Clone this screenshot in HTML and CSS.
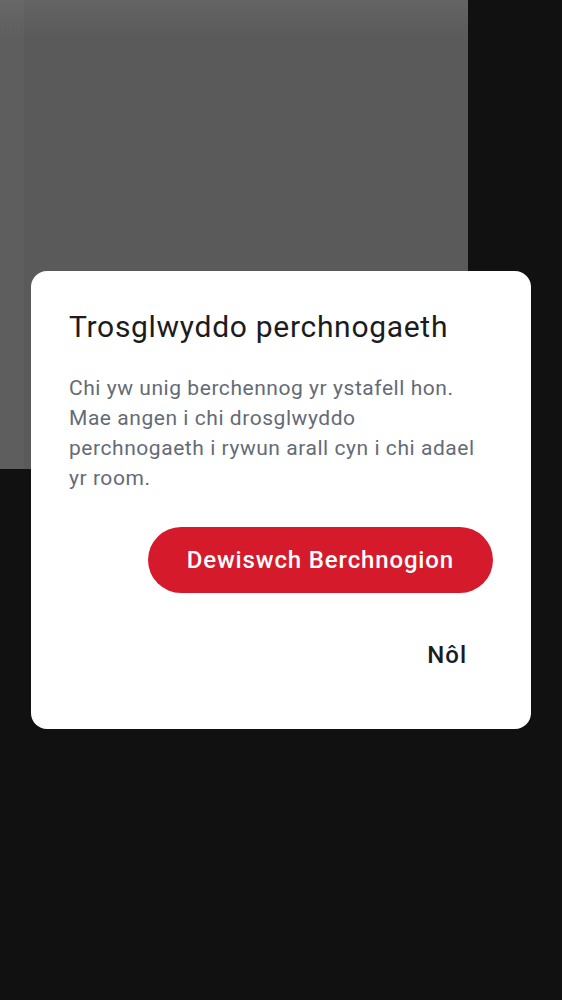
FILE: index.html
```html
<!DOCTYPE html>
<html lang="cy">
<head>
<meta charset="utf-8">
<title>Trosglwyddo perchnogaeth</title>
<link rel="stylesheet" href="styles.css">
</head>
<body>
<div class="screen">
  <div class="video"></div>
</div>
<div class="overlay">
  <div class="dialog" role="dialog">
    <h1 class="title">Trosglwyddo perchnogaeth</h1>
    <p class="message">Chi yw unig berchennog yr ystafell hon. Mae angen i chi drosglwyddo perchnogaeth i rywun arall cyn i chi adael yr room.</p>
    <div class="actions">
      <button class="btn-primary">Dewiswch Berchnogion</button>
      <button class="btn-text">Nôl</button>
    </div>
  </div>
</div>
</body>
</html>
```
FILE: styles.css
```css
html, body {
  margin: 0;
  padding: 0;
}
body {
  background: #111111;
  width: 562px;
  height: 1000px;
  overflow: hidden;
  font-family: Roboto, "Noto Sans", sans-serif;
}
.screen {
  display: flex;
}
.video {
  width: 468px;
  height: 469px;
  background:
    linear-gradient(to right, rgba(255,255,255,0.025) 0, rgba(255,255,255,0.025) 24px, transparent 24px),
    linear-gradient(to bottom, #646464 0, #5a5a5a 40px, #5a5a5a 100%);
}
.overlay {
  position: fixed;
  inset: 0;
  display: flex;
  align-items: center;
  justify-content: center;
}
.dialog {
  width: 500px;
  box-sizing: border-box;
  background: #ffffff;
  border-radius: 16px;
  padding: 39px 38px 41px 38px;
  display: flex;
  flex-direction: column;
}
.title {
  margin: 0;
  font-size: 30px;
  line-height: 34px;
  font-weight: 400;
  color: #1b1c20;
  letter-spacing: 0.7px;
}
.message {
  margin: 29px 0 0 0;
  font-size: 21px;
  line-height: 30px;
  color: #646b76;
  letter-spacing: 0.55px;
}
.actions {
  margin-top: 34px;
  display: flex;
  flex-direction: column;
  align-items: flex-end;
  gap: 29px;
}
button {
  font-family: Roboto, "Noto Sans", sans-serif;
  border: none;
  cursor: pointer;
}
.btn-primary {
  height: 66px;
  padding: 0 39px;
  border-radius: 33px;
  background: #d51a2c;
  color: #ffffff;
  font-size: 24px;
  font-weight: 500;
  letter-spacing: 0.85px;
}
.btn-text {
  height: 66px;
  padding: 0 26px;
  background: transparent;
  color: #1b1c20;
  font-size: 24px;
  font-weight: 500;
  letter-spacing: 1px;
}
```
